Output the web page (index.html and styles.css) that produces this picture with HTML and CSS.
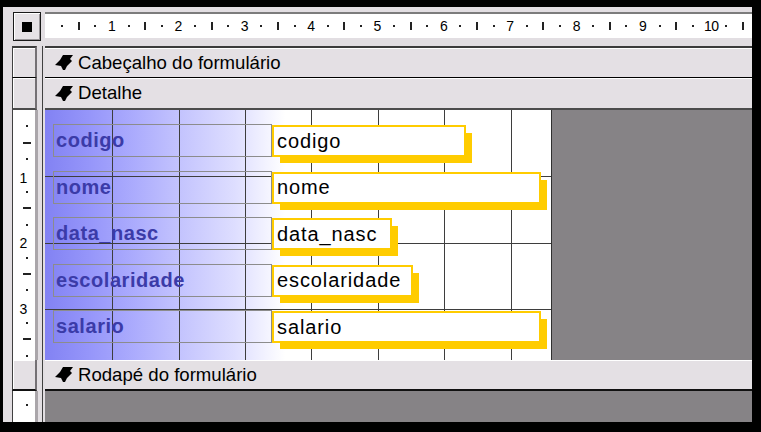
FILE: index.html
```html
<!DOCTYPE html>
<html lang="pt">
<head>
<meta charset="utf-8">
<title>Formulário - Modo Estrutura</title>
<link rel="stylesheet" href="styles.css">
</head>
<body>
<div class="frame">
  <div class="row row-ruler">
    <div class="lc lc-top"><div class="corner"><span class="corner-sq"></span></div></div>
    <div class="hruler">
      <span class="hc"><i class="hd"></i></span><span class="hc"><i class="ht"></i></span><span class="hc"><i class="hd"></i></span><span class="hc"><b class="hn">1</b></span>
      <span class="hc"><i class="hd"></i></span><span class="hc"><i class="ht"></i></span><span class="hc"><i class="hd"></i></span><span class="hc"><b class="hn">2</b></span>
      <span class="hc"><i class="hd"></i></span><span class="hc"><i class="ht"></i></span><span class="hc"><i class="hd"></i></span><span class="hc"><b class="hn">3</b></span>
      <span class="hc"><i class="hd"></i></span><span class="hc"><i class="ht"></i></span><span class="hc"><i class="hd"></i></span><span class="hc"><b class="hn">4</b></span>
      <span class="hc"><i class="hd"></i></span><span class="hc"><i class="ht"></i></span><span class="hc"><i class="hd"></i></span><span class="hc"><b class="hn">5</b></span>
      <span class="hc"><i class="hd"></i></span><span class="hc"><i class="ht"></i></span><span class="hc"><i class="hd"></i></span><span class="hc"><b class="hn">6</b></span>
      <span class="hc"><i class="hd"></i></span><span class="hc"><i class="ht"></i></span><span class="hc"><i class="hd"></i></span><span class="hc"><b class="hn">7</b></span>
      <span class="hc"><i class="hd"></i></span><span class="hc"><i class="ht"></i></span><span class="hc"><i class="hd"></i></span><span class="hc"><b class="hn">8</b></span>
      <span class="hc"><i class="hd"></i></span><span class="hc"><i class="ht"></i></span><span class="hc"><i class="hd"></i></span><span class="hc"><b class="hn">9</b></span>
      <span class="hc"><i class="hd"></i></span><span class="hc"><i class="ht"></i></span><span class="hc"><i class="hd"></i></span><span class="hc"><b class="hn hn-wide">10</b></span>
      <span class="hc"><i class="hd"></i></span><span class="hc"><i class="ht"></i></span>
    </div>
  </div>

  <div class="row row-bar row-cab">
    <div class="lc"><div class="lbox"></div></div>
    <div class="bar">
      <svg class="arrow" viewBox="0 0 18 15" width="18" height="15"><path d="M8 0 L18 0 L15 4 L17 6 L12 11 L10 15 L8 15 L6 11 L0 10 L5 5 Z" fill="#000"/></svg>
      <span>Cabeçalho do formulário</span>
    </div>
  </div>

  <div class="row row-bar row-det">
    <div class="lc"><div class="lbox"></div></div>
    <div class="bar">
      <svg class="arrow" viewBox="0 0 18 15" width="18" height="15"><path d="M8 0 L18 0 L15 4 L17 6 L12 11 L10 15 L8 15 L6 11 L0 10 L5 5 Z" fill="#000"/></svg>
      <span>Detalhe</span>
    </div>
  </div>

  <div class="row row-detail">
    <div class="lc">
      <div class="vruler">
        <span class="vc"><i class="vd"></i></span><span class="vc"><i class="vh"></i></span><span class="vc"><i class="vd"></i></span><span class="vc"><b class="vn">1</b></span>
        <span class="vc"><i class="vd"></i></span><span class="vc"><i class="vh"></i></span><span class="vc"><i class="vd"></i></span><span class="vc"><b class="vn">2</b></span>
        <span class="vc"><i class="vd"></i></span><span class="vc"><i class="vh"></i></span><span class="vc"><i class="vd"></i></span><span class="vc"><b class="vn">3</b></span>
        <span class="vc"><i class="vd"></i></span><span class="vc"><i class="vh"></i></span><span class="vc"><i class="vd"></i></span>
      </div>
    </div>
    <div class="form">
      <div class="frow"><div class="lbl">codigo</div><div class="tb w-codigo">codigo</div></div>
      <div class="frow"><div class="lbl">nome</div><div class="tb w-nome">nome</div></div>
      <div class="frow"><div class="lbl">data_nasc</div><div class="tb w-data">data_nasc</div></div>
      <div class="frow"><div class="lbl">escolaridade</div><div class="tb w-esc">escolaridade</div></div>
      <div class="frow"><div class="lbl">salario</div><div class="tb w-sal">salario</div></div>
    </div>
    <div class="void"></div>
  </div>

  <div class="row row-bar row-foot">
    <div class="lc"><div class="lbox"></div></div>
    <div class="bar">
      <svg class="arrow" viewBox="0 0 18 15" width="18" height="15"><path d="M8 0 L18 0 L15 4 L17 6 L12 11 L10 15 L8 15 L6 11 L0 10 L5 5 Z" fill="#000"/></svg>
      <span>Rodapé do formulário</span>
    </div>
  </div>

  <div class="row row-footbody">
    <div class="lc">
      <div class="vruler vruler-foot">
        <span class="vc"><i class="vd"></i></span>
      </div>
    </div>
    <div class="void"></div>
  </div>
</div>
</body>
</html>
```

FILE: styles.css
```css
* { box-sizing: border-box; }

html, body { margin: 0; }

body {
  width: 761px;
  height: 432px;
  overflow: hidden;
  background: #000;
  padding: 7px 9px 10px 3px;
}

.frame {
  height: 415px;
  background: #e2dee2;
  padding-top: 5px;
  display: flex;
  flex-direction: column;
  font-family: "Liberation Sans", Arial, sans-serif;
  color: #000;
}

.row { display: flex; flex: none; }

.lc {
  width: 40px;
  flex: none;
  margin-right: 2px;
  padding-left: 9px;
  border-right: 1px solid #404040;
  display: flex;
}

.lc-top { border-right: none; padding-left: 10px; }

/* top ruler row */
.row-ruler { height: 34px; align-items: flex-start; }

.corner {
  width: 28px;
  height: 29px;
  border: 1px solid #1a1a1a;
  background: #e6e2e6;
  box-shadow: inset 1px 1px #fff, inset -1px -1px #9a969a;
  display: flex;
  align-items: center;
  justify-content: center;
}

.corner-sq { width: 10px; height: 10px; background: #000; }

.hruler {
  flex: 1;
  height: 26px;
  border-top: 2px solid #7c7c7c;
  background: #fff;
  display: flex;
  align-items: center;
  padding-left: 8.9px;
  overflow: hidden;
}

.hc {
  width: 16.6px;
  height: 100%;
  flex: none;
  display: flex;
  align-items: center;
  justify-content: center;
}

.hd { width: 2px; height: 2px; background: #222; }
.ht { width: 2px; height: 8px; background: #222; }
.hn { font-size: 14px; line-height: 14px; font-weight: normal; }
.hn-wide { margin-left: 4px; letter-spacing: -0.5px; }

/* section bars */
.row-bar { height: 32px; }
.row-foot { height: 31px; }

.lbox {
  width: 25px;
  border-left: 1px solid #404040;
  border-right: 2px solid #747074;
  background: #e4e0e4;
  box-shadow: inset 1px 1px #fff;
}

.bar {
  flex: 1;
  display: flex;
  align-items: center;
  gap: 5px;
  padding-left: 10px;
  font-size: 18.6px;
  background: #e4e0e4;
  box-shadow: inset 0 1px #fff;
}

.arrow { flex: none; display: block; }

.row-cab .lbox, .row-cab .bar {
  border-top: 2px solid #3c3c3c;
  border-bottom: 1px solid #000;
}

.row-det .lbox, .row-det .bar { border-bottom: 2px solid #4c4c4c; }

.row-foot .lbox, .row-foot .bar { border-bottom: 2px solid #111; }

/* detail */
.row-detail { height: 250px; }

.vruler {
  width: 26px;
  border-left: 1px solid #404040;
  border-right: 3px solid #aaa6aa;
  background: #fff;
  display: flex;
  flex-direction: column;
  padding-top: 8.2px;
  overflow: hidden;
}

.vruler-foot { padding-top: 5.8px; }

.vc {
  height: 16.4px;
  flex: none;
  display: flex;
  align-items: center;
  justify-content: center;
}

.vd { width: 2px; height: 2px; background: #222; margin-left: 6px; }
.vh { width: 8px; height: 2px; background: #222; margin-left: 6px; }
.vn { font-size: 14px; line-height: 14px; font-weight: normal; margin-top: 4px; margin-left: -1px; }

.form {
  width: 507px;
  flex: none;
  border-right: 1px solid #303030;
  padding: 14px 0 0 8px;
  display: flex;
  flex-direction: column;
  gap: 13.6px;
  background:
    linear-gradient(90deg,
      transparent 67px, #3e3e3e 67px 68px,
      transparent 68px 134px, #3e3e3e 134px 135px,
      transparent 135px 200px, #3e3e3e 200px 201px,
      transparent 201px 266px, #3e3e3e 266px 267px,
      transparent 267px 333px, #3e3e3e 333px 334px,
      transparent 334px 399px, #3e3e3e 399px 400px,
      transparent 400px 466px, #3e3e3e 466px 467px,
      transparent 467px),
    linear-gradient(180deg,
      transparent 66px, #3e3e3e 66px 67px,
      transparent 67px 133px, #3e3e3e 133px 134px,
      transparent 134px 199px, #3e3e3e 199px 200px,
      transparent 200px),
    linear-gradient(90deg, #8282f3 0, #9696fa 45px, #acacfd 90px, #c6c6fe 140px, #dedeff 190px, #f2f2ff 220px, #ffffff 240px);
}

.void { flex: 1; background: #868386; }

.frow { display: flex; height: 33px; flex: none; }

.lbl {
  width: 219px;
  flex: none;
  border: 1px solid #8c8c8c;
  padding-left: 2px;
  display: flex;
  align-items: center;
  font-size: 20px;
  font-weight: bold;
  letter-spacing: 0.55px;
  color: #3b3ba8;
}

.tb {
  height: 32px;
  margin-top: 1px;
  flex: none;
  border: 2px solid #ffcc00;
  background: #fff;
  box-shadow: 7px 7px 0 -1px #ffcc00;
  padding-left: 3px;
  display: flex;
  align-items: center;
  font-size: 20px;
  letter-spacing: 0.9px;
  color: #000;
}

.w-codigo { width: 194px; }
.w-nome { width: 269px; }
.w-data { width: 120px; }
.w-esc { width: 141px; }
.w-sal { width: 269px; }

.row-footbody { flex: 1; }
```
